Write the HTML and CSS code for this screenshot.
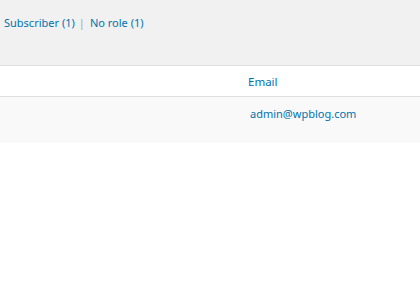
FILE: index.html
```html
<!DOCTYPE html>
<html lang="en">
<head>
  <meta charset="UTF-8">
  <title>Users</title>
  <link rel="stylesheet" href="styles.css">
</head>
<body>
  <div class="wrap">
    <ul class="subsubsub">
      <li><a href="#">Subscriber <span class="count">(1)</span></a><span class="sep">|</span></li>
      <li><a href="#">No role <span class="count">(1)</span></a></li>
    </ul>

    <table class="users">
      <thead>
        <tr>
          <th class="col-name"></th>
          <th class="col-email"><a href="#">Email</a></th>
        </tr>
      </thead>
      <tbody>
        <tr>
          <td class="col-name"></td>
          <td class="col-email"><a href="#">admin@wpblog.com</a></td>
        </tr>
      </tbody>
    </table>
  </div>
</body>
</html>
```

FILE: styles.css
```css
* {
  box-sizing: border-box;
}

body {
  margin: 0;
  background: #fff;
  font-family: "Noto Sans", "Open Sans", sans-serif;
  font-size: 11px;
  color: #444;
}

a {
  color: #0073aa;
  text-decoration: none;
}

.wrap {
  background: #f1f1f1;
}

.subsubsub {
  list-style: none;
  margin: 0;
  padding: 13px 0 0 4px;
  height: 65px;
  display: flex;
  font-size: 11px;
}

.subsubsub li {
  display: flex;
  line-height: 20px;
}

.sep {
  color: #a0a5aa;
  padding: 0 5px 0 4px;
}

.users {
  width: 100%;
  border-collapse: collapse;
  border-top: 1px solid #e1e1e1;
}

.users th {
  background: #fff;
  font-weight: normal;
  text-align: left;
  height: 31px;
  padding: 0 8px;
  border-bottom: 1px solid #e1e1e1;
  font-size: 11.5px;
}

.users td {
  background: #f9f9f9;
  height: 46px;
  vertical-align: top;
  padding: 9px 8px 0 10px;
  font-size: 11px;
}

.users .col-name {
  width: 240px;
}
```
